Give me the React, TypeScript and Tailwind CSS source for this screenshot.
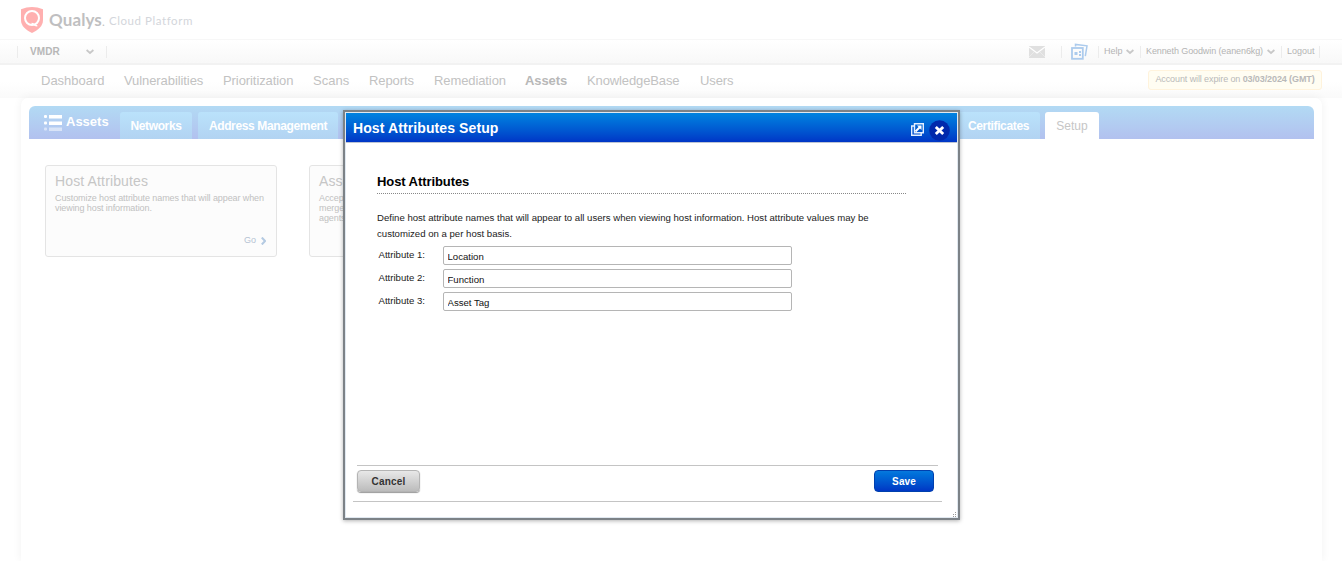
import React from "react";

const navItems = [
  { label: "Dashboard", cls: "w-[83px]" },
  { label: "Vulnerabilities", cls: "w-[99px] tracking-[-0.08px]" },
  { label: "Prioritization", cls: "w-[90px] tracking-[-0.08px]" },
  { label: "Scans", cls: "w-[56px]" },
  { label: "Reports", cls: "w-[65px] tracking-[-0.08px]" },
  { label: "Remediation", cls: "w-[91px] tracking-[-0.1px]" },
  { label: "Assets", cls: "w-[62px] font-bold text-[#b8b8b8] tracking-[-0.08px]" },
  { label: "KnowledgeBase", cls: "w-[113px] tracking-[-0.12px]" },
  { label: "Users", cls: "w-[60px] tracking-[-0.1px]" },
];

const fields = [
  { label: "Attribute 1:", value: "Location" },
  { label: "Attribute 2:", value: "Function" },
  { label: "Attribute 3:", value: "Asset Tag" },
];

function Chevron({ className = "" }: { className?: string }) {
  return (
    <svg className={`shrink-0 ${className}`} width="8" height="6" viewBox="0 0 8 6" fill="none" stroke="#c8c8c8" strokeWidth="1.700">
      <path d="M.6 1L4 4l3.400-3" />
    </svg>
  );
}

function Header() {
  return (
    <header className="flex h-[39px] items-start pl-[21px] pt-[7px]">
      <svg width="22" height="26" viewBox="0 0 22 26">
        <path d="M0 2.200Q11-2.200 22 2.200V13c0 6-4.500 9.800-11 13C4.500 22.800 0 19 0 13z" fill="#ffb0b0" />
        <circle cx="11" cy="11" r="7" fill="none" stroke="#fff" strokeWidth="2" />
        <path d="M10.500 16.500c2.500 0 3 2.500 5.800 2.300" fill="none" stroke="#fff" strokeWidth="1.600" />
      </svg>
      <span className="ml-[6px] mt-[4px] w-[60px] whitespace-nowrap font-[Lato,sans-serif] text-[17px] font-bold leading-[18px] tracking-[0.1px] text-[#bfbfc1]">
        Qualys<span className="text-[12px] font-normal">.</span>
      </span>
      <span className="mt-[6px] whitespace-nowrap font-[Lato,sans-serif] text-[11.500px] leading-[16px] tracking-[0.56px] text-[#d3d6db]">
        Cloud Platform
      </span>
    </header>
  );
}

function UtilityBar() {
  return (
    <div className="flex h-[26px] items-center border-t border-b-2 border-t-[#f7f7f7] border-b-[#f2f2f2] bg-linear-to-b from-white to-[#f8f8f8] text-[9px] text-[#b4b4b4]">
      <div className="ml-[17px] flex h-[12px] w-[90px] items-center border-x border-[#ececec] pl-[12px]">
        <b className="w-[56px] text-[10px] tracking-[0.1px] text-[#b7b7b7]">VMDR</b>
        <Chevron />
      </div>
      <svg className="ml-[922px]" width="16" height="12" viewBox="0 0 16 12">
        <path d="M0 0h16v12H0z" fill="#e0e0e0" />
        <path d="M0 1l8 6 8-6" fill="none" stroke="#fff" strokeWidth="1.200" />
        <path d="M0 11l5-5M16 11l-5-5" fill="none" stroke="#eee" strokeWidth=".8" />
      </svg>
      <i className="ml-[16px] h-[12px] w-px bg-[#ececec]" />
      <svg className="ml-[9px]" width="17" height="17" viewBox="0 0 17 17" fill="none" stroke="#accbed">
        <path d="M4.500 3.500V1.400L16 2.800 14.300 13.200" strokeWidth="1.500" />
        <rect x="1" y="5" width="10.800" height="10.800" strokeWidth="1.800" />
        <path d="M3.500 9h3v3h-3zM8 8h2v2H8zM8 11h2v2H8z" fill="#accbed" stroke="none" />
      </svg>
      <i className="ml-[10px] h-[12px] w-px bg-[#ececec]" />
      <span className="ml-[5px] w-[22px] shrink-0 whitespace-nowrap">Help</span>
      <Chevron />
      <i className="ml-[6px] h-[12px] w-px bg-[#ececec]" />
      <span className="ml-[5px] w-[121px] shrink-0 whitespace-nowrap tracking-[-0.1px]">Kenneth Goodwin (eanen6kg)</span>
      <Chevron />
      <i className="ml-[6px] h-[12px] w-px bg-[#ececec]" />
      <span className="ml-[5px] w-[32px] whitespace-nowrap">Logout</span>
      <i className="h-[12px] w-px bg-[#ececec]" />
    </div>
  );
}

function MainNav() {
  return (
    <nav className="flex h-[33px] items-start bg-linear-to-b from-white via-white to-[#fafafa] pl-[41px] text-[13px] text-[#c2c2c2]">
      {navItems.map((n) => (
        <span key={n.label} className={`mt-[6px] whitespace-nowrap leading-[20px] ${n.cls}`}>
          {n.label}
        </span>
      ))}
      <div className="ml-auto mr-[20px] mt-[5px] flex h-[20px] w-[174px] justify-center whitespace-nowrap rounded-[3px] border border-[#fff3dc] bg-[#fffdf2] text-[9px] leading-[17px] tracking-[-0.1px] text-[#b9b9b9]">
        Account will expire on&nbsp;<b>03/03/2024 (GMT)</b>
      </div>
    </nav>
  );
}

function TabBar() {
  const tab =
    "flex h-[27px] items-center justify-center whitespace-nowrap rounded-t-[3px] bg-linear-to-b from-[#bae2fb] to-[#b2d3f2] text-[12px] font-bold tracking-[-0.36px] text-white";
  return (
    <div className="flex h-[33px] items-end rounded-t-[6px] bg-linear-to-b from-[#b2daf4] to-[#b2c1ef]">
      <div className="flex h-[33px] w-[91px] pl-[15px] pt-[7px] text-white">
        <svg className="mt-[2px]" width="18" height="17" viewBox="0 0 18 17" fill="#fff">
          <rect width="3" height="3" rx="1" />
          <rect x="5" width="13" height="3.500" />
          <rect y="6.500" width="3" height="3" rx="1" />
          <rect x="5" y="6.500" width="13" height="3.500" />
          <g opacity=".5">
            <rect y="12.500" width="3" height="3" rx="1" />
            <rect x="5" y="12.500" width="13" height="3.500" />
          </g>
        </svg>
        <b className="ml-[4px] text-[13px] leading-[17px]">Assets</b>
      </div>
      <div className={`w-[72px] ${tab}`}>Networks</div>
      <div className={`ml-[6px] w-[140px] ${tab}`}>Address Management</div>
      <div className={`ml-[583px] w-[119px] pl-[36px] ${tab}`}>Certificates</div>
      <div className="ml-[5px] flex h-[27px] w-[54px] items-center justify-center rounded-t-[3px] bg-white text-[12px] text-[#c6c6c6]">
        Setup
      </div>
    </div>
  );
}

function Card({ title, text }: { title: string; text: React.ReactNode }) {
  return (
    <div className="flex h-[92px] w-[232px] flex-col rounded-[3px] border border-[#e4e4e4] bg-[#fcfcfc] pl-[9px] pr-[10px] pt-[7px]">
      <h3 className="text-[14px] leading-[16px] tracking-[0.14px] text-[#c6c6c6]">{title}</h3>
      <p className="mt-[4px] whitespace-nowrap text-[9px] leading-[10px] tracking-[-0.09px] text-[#c1c1c1]">{text}</p>
      <div className="mb-[9px] mt-auto flex items-center justify-end text-[9px] leading-[14px] text-[#b5c3d3]">
        Go
        <svg className="ml-[5px] mt-[1px]" width="5" height="8" viewBox="0 0 5 8" fill="none" stroke="#b4cae2" strokeWidth="2">
          <path d="M.8 .5L4 4 .8 7.500" />
        </svg>
      </div>
    </div>
  );
}

function Dialog() {
  return (
    <div className="absolute left-[343px] top-[110px] flex h-[410px] w-[617px] flex-col border-2 border-[#7c8287] bg-white shadow-[0_1px_4px_rgba(0,0,0,0.3)]">
      <div className="flex h-full flex-col border border-[#e0e8f0]">
        <div className="flex h-[30px] shrink-0 items-center border-b border-[#bcc4d4] bg-linear-to-b from-[#0083e0] to-[#0035c6] pl-[7px] pr-[7px] text-white">
          <h1 className="mt-[2px] text-[14px] font-bold tracking-[0.1px]">Host Attributes Setup</h1>
          <svg className="ml-auto mt-[3px]" width="13" height="13" viewBox="0 0 13 13" fill="none" stroke="#e4efff" strokeWidth="1.400">
            <path d="M3 3H.7v9.300h9.500V10" />
            <path d="M3.500 .7h8.800v9H3.500z" />
            <path d="M4.500 8.500L9 4" stroke="#fff" strokeWidth="1.900" />
            <path d="M6 2.500h4.500V7z" fill="#fff" stroke="none" />
          </svg>
          <svg className="ml-[5px] mt-[5px]" width="21" height="21" viewBox="0 0 21 21">
            <circle cx="10.500" cy="10.500" r="10.300" fill="#0029ac" />
            <path d="M6.800 7l7.400 7M14.200 7l-7.400 7" stroke="#fff" strokeWidth="2.900" />
          </svg>
        </div>
        <div className="pl-[31px] pt-[30px]">
          <h2 className="h-[21px] w-[529px] border-b border-dotted border-[#888] text-[13px] font-bold leading-[17px] tracking-[-0.08px] text-black">
            Host Attributes
          </h2>
          <p className="mt-[16px] w-[520px] text-[9.600px] leading-[16px] text-[#222]">
            Define host attribute names that will appear to all users when viewing host information. Host attribute values may be
            customized on a per host basis.
          </p>
          <div className="mt-[4px] flex flex-col gap-[4px]">
            {fields.map((f) => (
              <label key={f.label} className="flex h-[19px] text-[9.600px] text-[#222]">
                <span className="w-[66px] pl-[1.500px] leading-[18px]">{f.label}</span>
                <input
                  className="h-[19px] w-[349px] rounded-[2px] border border-[#b5b5b5] bg-white px-[3.500px] pt-[2px] text-[9.600px] leading-[15px] text-[#111] outline-none"
                  defaultValue={f.value}
                />
              </label>
            ))}
          </div>
        </div>
        <div className="ml-[7px] mr-[15px] mt-auto flex h-[37px] justify-between border-b border-[#c4c4c4]">
          <div className="ml-[4px] mr-[4px] flex flex-1 items-start justify-between border-t border-[#c4c4c4] pr-[4px] pt-[4px]">
            <button className="h-[22px] w-[63px] rounded-[4px] border border-[#b4b4b4] bg-linear-to-b from-[#e8e8e8] to-[#bcbcbc] pt-px text-[10px] font-bold tracking-[0.2px] text-[#333] shadow-[0_1px_1px_#999]">
              Cancel
            </button>
            <button className="h-[22px] w-[60px] rounded-[4px] border border-[#0040ae] bg-linear-to-b from-[#0879dd] to-[#0036c4] pt-px text-[10px] font-bold tracking-[0.1px] text-white">
              Save
            </button>
          </div>
        </div>
        <div className="flex h-[15px] shrink-0 items-end justify-end">
          <svg width="5" height="5" viewBox="0 0 5 5" fill="#999">
            <path d="M3 0h1v1H3zM3 2h1v1H3zM1 2h1v1H1zM3 4h1v1H3zM1 4h1v1H1z" />
          </svg>
        </div>
      </div>
    </div>
  );
}

export default function App() {
  return (
    <div className="relative flex h-[561px] w-[1342px] flex-col overflow-hidden bg-white font-['Liberation_Sans',Arial,sans-serif]">
      <Header />
      <UtilityBar />
      <MainNav />
      <main className="ml-[21px] mr-[20px] flex-1 rounded-t-[7px] bg-white px-[8px] pt-[8px] shadow-[0_0_10px_rgba(0,0,0,0.06)]">
        <TabBar />
        <div className="flex gap-[32px] pl-[16px] pt-[26px]">
          <Card
            title="Host Attributes"
            text={
              <>
                Customize host attribute names that will appear when
                <br />
                viewing host information.
              </>
            }
          />
          <Card
            title="Asset"
            text={
              <>
                Accept
                <br />
                merge
                <br />
                agents
              </>
            }
          />
        </div>
      </main>
      <Dialog />
    </div>
  );
}
